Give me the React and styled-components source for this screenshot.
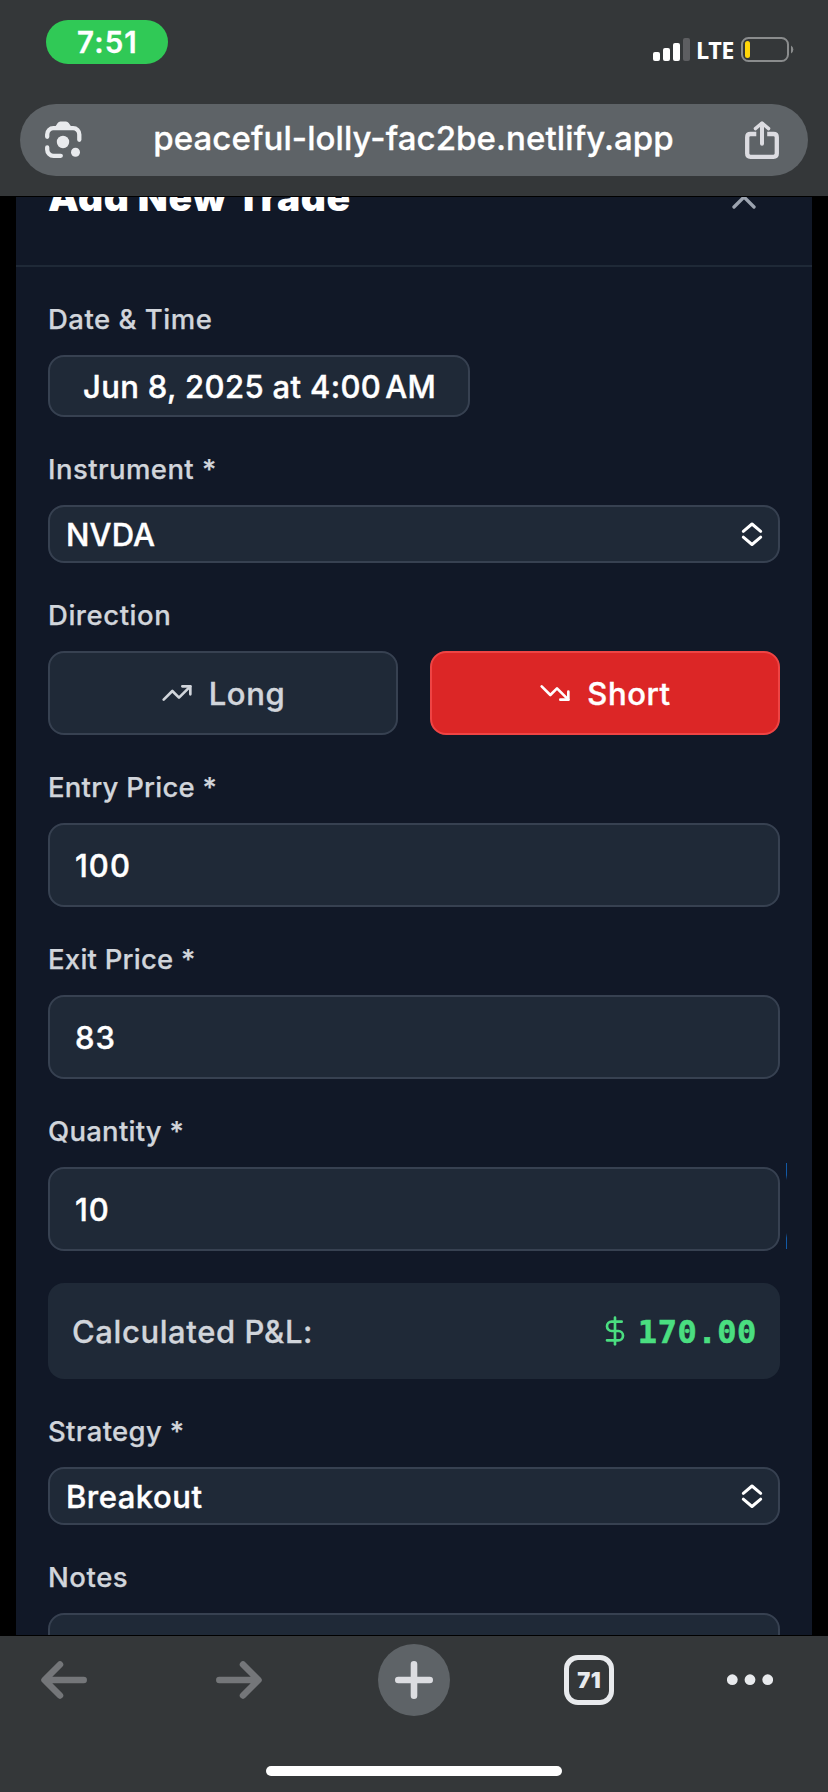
import React, { useState } from 'react';
import styled, { createGlobalStyle } from 'styled-components';
import { ChevronUp, DollarSign, TrendingDown, TrendingUp } from 'lucide-react';

const GlobalStyle = createGlobalStyle`
  * {
    box-sizing: border-box;
  }

  body {
    margin: 0;
    background: #000;
    font-family: Inter, "Liberation Sans", sans-serif;
  }
`;

const Screen = styled.div`
  width: 828px;
  height: 1792px;
  display: flex;
  flex-direction: column;
  overflow: hidden;
  background: #000;
`;

const BrowserTop = styled.header`
  height: 196px;
  flex-shrink: 0;
  padding: 0 20px 20px;
  display: flex;
  flex-direction: column;
  background: #343739;
`;

const StatusBar = styled.div`
  height: 104px;
  padding: 20px 14px 0 26px;
  display: flex;
  justify-content: space-between;
  align-items: flex-start;
`;

const Clock = styled.div`
  width: 122px;
  height: 44px;
  border-radius: 22px;
  background: #30c956;
  color: #fff;
  font-size: 29.5px;
  font-weight: 600;
  line-height: 44px;
  letter-spacing: 1.1px;
  text-indent: 1px;
  text-align: center;
  -webkit-text-stroke: 0.3px;
`;

const StatusIcons = styled.div`
  display: flex;
  align-items: center;
  height: 25px;
  margin-top: 17px;
`;

const Network = styled.span`
  width: 51px;
  padding-left: 6px;
  font-family: "Noto Sans", sans-serif;
  font-size: 23.5px;
  font-weight: 700;
  line-height: 24px;
  letter-spacing: -0.5px;
  color: #fff;
`;

const AddressBar = styled.div`
  height: 72px;
  padding: 0 28px 0 25px;
  border-radius: 36px;
  display: flex;
  align-items: center;
  justify-content: space-between;
  background: #5e6367;
`;

const Address = styled.div`
  font-size: 33px;
  font-weight: 500;
  line-height: 40px;
  letter-spacing: 0.08px;
  color: #fff;
  padding: 0 0 4px 1px;
  -webkit-text-stroke: 0.3px;
`;

const Viewport = styled.main`
  flex: 1;
  min-height: 0;
  overflow: hidden;
  padding: 0 16px;
  border-top: 1px solid #000;
  border-bottom: 1px solid #000;
`;

const Panel = styled.section`
  height: 1600px;
  margin-top: -58px; /* scrolled under the address bar */
  background: #111827;
`;

const PanelHeader = styled.div`
  height: 128px;
  padding: 0 32px;
  display: flex;
  align-items: center;
  justify-content: space-between;
  border-bottom: 2px solid #1f2937;
`;

const Title = styled.h2`
  margin: 0;
  padding-bottom: 11px;
  font-size: 39px;
  font-weight: 900;
  line-height: 56px;
  letter-spacing: 0.58px;
  color: #fff;
`;

const CollapseButton = styled.button`
  padding: 16px;
  border: none;
  background: none;
  color: #9ca3af;
  display: flex;
`;

const Form = styled.form`
  padding: 32px;
  display: flex;
  flex-direction: column;
  gap: 32px;
`;

const Field = styled.div`
  position: relative;
  display: flex;
  flex-direction: column;
  align-items: stretch;
`;

const Label = styled.label`
  height: 40px;
  margin-bottom: 16px;
  font-size: 27.5px;
  font-weight: 500;
  line-height: 40px;
  letter-spacing: ${(props) => props.$tracking || 0}px;
  color: #d1d5db;
  -webkit-text-stroke: 0.25px;
`;

const Control = styled.div`
  border: 2px solid #374151;
  border-radius: 16px;
  background: #1f2937;
  color: #fff;
  font-size: 31px;
  font-weight: 500;
  -webkit-text-stroke: 0.4px;
`;

const DateControl = styled(Control)`
  width: 422px;
  height: 62px;
  padding: 1px 0 0 33px;
  display: flex;
  align-items: center;
  gap: 4px;
  letter-spacing: 0.36px;
  white-space: nowrap;
`;

const SelectControl = styled(Control)`
  height: 58px;
  padding: 0 15px 0 16px;
  display: flex;
  align-items: center;
  justify-content: space-between;
  letter-spacing: ${(props) => props.$tracking || 0}px;
`;

const Input = styled.input`
  width: 100%;
  height: 84px;
  padding: 0 25px;
  border: 2px solid #374151;
  border-radius: 16px;
  outline: none;
  background: #1f2937;
  color: #fff;
  font-family: inherit;
  font-size: 31px;
  font-weight: 500;
  letter-spacing: 1px;
  -webkit-text-stroke: 0.4px;
`;

const NotesInput = styled(Control)`
  height: 200px;
`;

const Directions = styled.div`
  display: grid;
  grid-template-columns: 1fr 1fr;
  gap: 32px;
`;

const DirectionButton = styled.button`
  height: 84px;
  padding: 0;
  border: 2px solid ${(props) => (props.$active ? '#ef4444' : '#374151')};
  border-radius: 16px;
  background: ${(props) => (props.$active ? '#dc2626' : '#1f2937')};
  color: ${(props) => (props.$active ? '#fff' : '#d1d5db')};
  display: flex;
  align-items: center;
  justify-content: center;
  gap: 16px;
  font-family: inherit;
  font-size: 31px;
  font-weight: 500;
  letter-spacing: 0.6px;
  -webkit-text-stroke: 0.4px;
`;

const FocusEdge = styled.span`
  position: absolute;
  right: -7px;
  top: 52px;
  width: 1px;
  height: 86px;
  background: linear-gradient(#1259a5 0 12px, transparent 17px 70px, #1259a5 75px);
`;

const Result = styled.div`
  height: 96px;
  padding: 0 23px 0 24px;
  border-radius: 16px;
  display: flex;
  align-items: center;
  justify-content: space-between;
  background: #1f2937;
`;

const ResultLabel = styled.span`
  font-size: 31px;
  font-weight: 500;
  letter-spacing: 0.6px;
  color: #d1d5db;
  -webkit-text-stroke: 0.3px;
`;

const ResultValue = styled.span`
  display: flex;
  align-items: center;
  gap: 7px;
  color: #4ade80;
`;

const Amount = styled.span`
  padding-top: 2px;
  font-family: "DejaVu Sans Mono", monospace;
  font-size: 32px;
  font-weight: 700;
  letter-spacing: 0.6px;
  -webkit-text-stroke: 0.6px;
`;

const BrowserBottom = styled.footer`
  height: 156px;
  flex-shrink: 0;
  padding-top: 8px;
  display: flex;
  flex-direction: column;
  align-items: center;
  background: #343739;
`;

const Toolbar = styled.nav`
  width: 100%;
  height: 72px;
  display: grid;
  grid-template-columns: 128px 222px 128px 222px 100px;
  align-items: center;
  justify-items: center;
`;

const NewTab = styled.div`
  width: 72px;
  height: 72px;
  border-radius: 50%;
  display: flex;
  align-items: center;
  justify-content: center;
  background: #5e6367;
`;

const TabCount = styled.div`
  width: 50px;
  height: 50px;
  border: 5.5px solid #e8eaed;
  border-radius: 14px;
  color: #e8eaed;
  font-size: 22px;
  font-weight: 900;
  line-height: 40px;
  letter-spacing: 0.3px;
  text-indent: 0.3px;
  text-align: center;
`;

const HomeIndicator = styled.div`
  width: 296px;
  height: 10px;
  margin-top: 50px;
  border-radius: 5px;
  background: #fff;
`;

const SignalIcon = () => (
  <svg width="37" height="24" viewBox="0 0 37 24" fill="#fff">
    <rect x="0" y="14" width="7" height="9" rx="2" />
    <rect x="10" y="10" width="7" height="13" rx="2" />
    <rect x="20" y="5" width="7" height="18" rx="2" />
    <rect x="30" y="0" width="7" height="23" rx="2" fill="#5d5e61" />
  </svg>
);

const BatteryIcon = () => (
  <svg width="53" height="25" viewBox="0 0 53 25" fill="none">
    <rect x="1" y="1" width="46" height="23" rx="6.5" stroke="#8a8c8d" strokeWidth="2" />
    <path d="M50 8.5a4.6 4.6 0 0 1 0 8z" fill="#8a8c8d" />
    <rect x="4" y="4" width="5" height="17" rx="2.5" fill="#ffd60a" />
  </svg>
);

const LensIcon = () => (
  <svg width="37" height="38" viewBox="0 0 37 38" fill="none" stroke="#e8eaed" strokeWidth="4.3" strokeLinecap="round">
    <path d="M2.2 15.8V13.4A6.2 6.2 0 0 1 8.4 7.2H28.1A6.2 6.2 0 0 1 34.3 13.4V18.8" />
    <path d="M2.2 26.4V28.4A6.4 6.4 0 0 0 8.6 34.8H15.8" />
    <path d="M10 6L12.7 2Q13.7 0.5 15.4 0.5H21Q22.7 0.5 23.7 2L26.5 6V8H10Z" fill="#e8eaed" stroke="none" />
    <circle cx="18" cy="21" r="6.2" fill="#e8eaed" stroke="none" />
    <circle cx="30.5" cy="31.3" r="4.5" fill="#e8eaed" stroke="none" />
  </svg>
);

const ShareIcon = () => (
  <svg width="36" height="40" viewBox="0 0 36 40" fill="none" stroke="#dcdce1" strokeLinecap="round" strokeLinejoin="round">
    <path d="M12.3 14H6.5Q3.2 14 3.2 17.3V33.5Q3.2 36.8 6.5 36.8H29.5Q32.8 36.8 32.8 33.5V17.3Q32.8 14 29.5 14H23.2" strokeWidth="4.3" strokeLinecap="butt" />
    <path d="M18 23.7V4" strokeWidth="4" />
    <path d="M11.4 8.6L18 3L24.6 8.6" strokeWidth="3.4" />
  </svg>
);

const SelectIcon = () => (
  <svg width="22" height="26" viewBox="0 0 22 26" fill="none" stroke="#fff" strokeWidth="3" strokeLinecap="round" strokeLinejoin="round">
    <path d="M2.3 10.3L11 3L19.7 10.3" />
    <path d="M2.3 16.2L11 23.5L19.7 16.2" />
  </svg>
);

const ArrowIcon = ({ forward }) => (
  <svg width="46" height="38" viewBox="0 0 46 38" fill="none" stroke="#747679" strokeWidth="6.5" strokeLinecap="round" strokeLinejoin="round">
    {forward ? (
      <path d="M3.3 19H42M27 3.5L42.5 19L27 34.5" />
    ) : (
      <path d="M42.7 19H4M19 3.5L3.5 19L19 34.5" />
    )}
  </svg>
);

const PlusIcon = () => (
  <svg width="40" height="40" viewBox="0 0 40 40" fill="none" stroke="#dcdde1" strokeWidth="6.6" strokeLinecap="round">
    <path d="M4.3 20H35.7M20 4.3V35.7" />
  </svg>
);

const MoreIcon = () => (
  <svg width="46" height="12" viewBox="0 0 46 12" fill="#e8eaed">
    <circle cx="5.3" cy="5.7" r="5.4" />
    <circle cx="23" cy="5.7" r="5.4" />
    <circle cx="40.7" cy="5.7" r="5.4" />
  </svg>
);

const TradeForm = () => {
  const [direction, setDirection] = useState('short');
  const [entry, setEntry] = useState('100');
  const [exit, setExit] = useState('83');
  const [quantity, setQuantity] = useState('10');

  const diff = direction === 'long' ? exit - entry : entry - exit;
  const pnl = (diff * quantity).toFixed(2);

  return (
    <Form onSubmit={(e) => e.preventDefault()}>
      <Field>
        <Label $tracking={0.5}>Date &amp; Time</Label>
        <DateControl>
          <span>Jun 8, 2025 at 4:00</span>
          <span>AM</span>
        </DateControl>
      </Field>
      <Field>
        <Label $tracking={0.43}>Instrument *</Label>
        <SelectControl $tracking={0.1}>
          NVDA
          <SelectIcon />
        </SelectControl>
      </Field>
      <Field>
        <Label $tracking={0.55}>Direction</Label>
        <Directions>
          <DirectionButton type="button" $active={direction === 'long'} onClick={() => setDirection('long')}>
            <TrendingUp size={32} />
            Long
          </DirectionButton>
          <DirectionButton type="button" $active={direction === 'short'} onClick={() => setDirection('short')}>
            <TrendingDown size={32} />
            Short
          </DirectionButton>
        </Directions>
      </Field>
      <Field>
        <Label $tracking={0.24}>Entry Price *</Label>
        <Input value={entry} onChange={(e) => setEntry(e.target.value)} />
      </Field>
      <Field>
        <Label $tracking={0.24}>Exit Price *</Label>
        <Input value={exit} onChange={(e) => setExit(e.target.value)} />
      </Field>
      <Field>
        <Label $tracking={0.26}>Quantity *</Label>
        <Input value={quantity} onChange={(e) => setQuantity(e.target.value)} />
        <FocusEdge />
      </Field>
      <Result>
        <ResultLabel>Calculated P&amp;L:</ResultLabel>
        <ResultValue>
          <DollarSign size={32} />
          <Amount>{pnl}</Amount>
        </ResultValue>
      </Result>
      <Field>
        <Label $tracking={0.35}>Strategy *</Label>
        <SelectControl $tracking={0.5}>
          Breakout
          <SelectIcon />
        </SelectControl>
      </Field>
      <Field>
        <Label $tracking={0.55}>Notes</Label>
        <NotesInput />
      </Field>
    </Form>
  );
};

const App = () => {
  return (
    <>
      <GlobalStyle />
      <Screen>
        <BrowserTop>
          <StatusBar>
            <Clock>7:51</Clock>
            <StatusIcons>
              <SignalIcon />
              <Network>LTE</Network>
              <BatteryIcon />
            </StatusIcons>
          </StatusBar>
          <AddressBar>
            <LensIcon />
            <Address>peaceful-lolly-fac2be.netlify.app</Address>
            <ShareIcon />
          </AddressBar>
        </BrowserTop>
        <Viewport>
          <Panel>
            <PanelHeader>
              <Title>Add New Trade</Title>
              <CollapseButton>
                <ChevronUp size={40} />
              </CollapseButton>
            </PanelHeader>
            <TradeForm />
          </Panel>
        </Viewport>
        <BrowserBottom>
          <Toolbar>
            <ArrowIcon />
            <ArrowIcon forward />
            <NewTab>
              <PlusIcon />
            </NewTab>
            <TabCount>71</TabCount>
            <MoreIcon />
          </Toolbar>
          <HomeIndicator />
        </BrowserBottom>
      </Screen>
    </>
  );
};

export default App;
